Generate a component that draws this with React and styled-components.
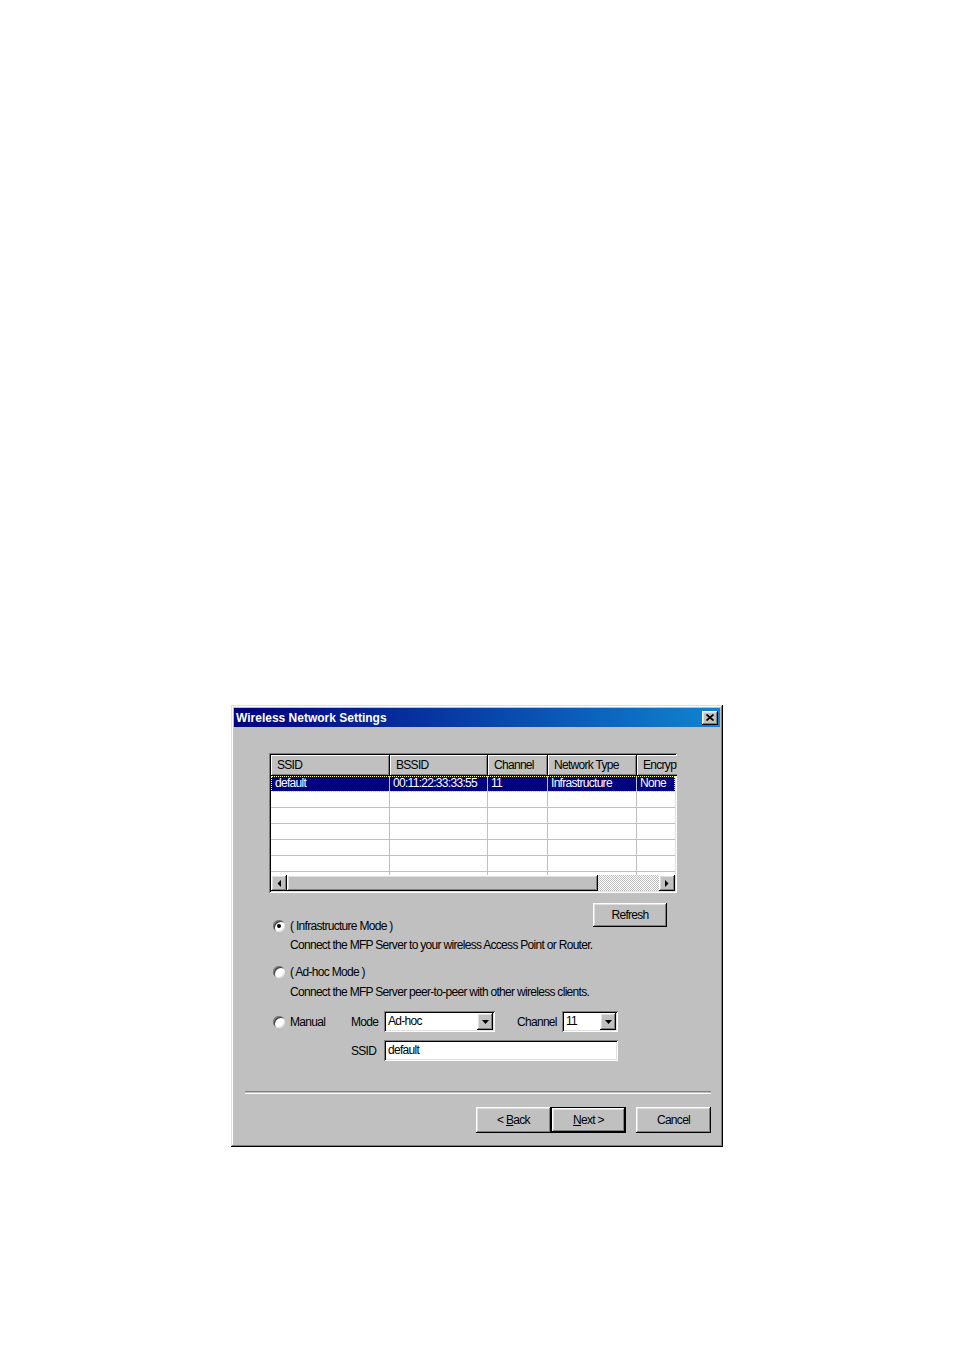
import React from 'react';
import styled, { createGlobalStyle, css } from 'styled-components';

const GlobalStyle = createGlobalStyle`
  html, body {
    margin: 0;
    padding: 0;
    background: #fff;
  }
  body {
    font-family: "Liberation Sans Narrow", "Liberation Sans", Arial, sans-serif;
    font-size: 12px;
    letter-spacing: -0.7px;
    color: #000;
  }
`;

const raised = css`
  box-shadow: inset -1px -1px #000, inset 1px 1px #fff, inset -2px -2px #808080, inset 2px 2px #dfdfdf;
`;

const sunken = css`
  box-shadow: inset 1px 1px #808080, inset -1px -1px #fff, inset 2px 2px #000, inset -2px -2px #dfdfdf;
`;

const Page = styled.div`
  width: 954px;
  height: 1350px;
  box-sizing: border-box;
  padding: 705px 0 0 231px;
`;

const Dialog = styled.div`
  width: 492px;
  height: 442px;
  box-sizing: border-box;
  padding: 3px;
  background: #c0c0c0;
  box-shadow: inset -1px -1px #000, inset 1px 1px #dfdfdf, inset -2px -2px #808080, inset 2px 2px #fff;
  display: flex;
  flex-direction: column;
`;

const TitleBar = styled.div`
  height: 19px;
  display: flex;
  align-items: center;
  justify-content: space-between;
  padding: 0 2px;
  background: linear-gradient(90deg, #000080, #1084d0);
`;

const Title = styled.span`
  font-family: "Liberation Sans", Arial, sans-serif;
  font-weight: bold;
  font-size: 12px;
  letter-spacing: 0;
  color: #fff;
`;

const CloseButton = styled.div`
  width: 16px;
  height: 14px;
  background: #c0c0c0;
  ${raised};
  display: flex;
  align-items: center;
  justify-content: center;
`;

const Body = styled.div`
  padding: 26px 0 0 35px;
  display: flex;
  flex-direction: column;
`;

const ListView = styled.div`
  width: 408px;
  height: 140px;
  box-sizing: border-box;
  padding: 2px;
  background: #fff;
  ${sunken};
  display: flex;
  flex-direction: column;
  overflow: hidden;
`;

const HeaderRow = styled.div`
  display: flex;
  height: 21px;
  flex: none;
`;

const HeaderCell = styled.div`
  flex: none;
  width: ${p => p.$w}px;
  box-sizing: border-box;
  padding-left: 6px;
  line-height: 20px;
  background: #c0c0c0;
  white-space: nowrap;
  overflow: hidden;
  box-shadow: inset -1px -1px #000, inset 1px 1px #fff, inset -2px -2px #808080;
`;

const Rows = styled.div`
  flex: 1;
  overflow: hidden;
`;

const Row = styled.div`
  display: flex;
  height: 16px;
  box-sizing: border-box;
  border-bottom: 1px solid #c0c0c0;
  background: ${p => (p.$selected ? '#000080' : '#fff')};
  color: ${p => (p.$selected ? '#fff' : '#000')};
  outline: ${p => (p.$selected ? '1px dotted #ffff80' : 'none')};
  outline-offset: -1px;
`;

const Cell = styled.div`
  flex: none;
  width: ${p => p.$w}px;
  box-sizing: border-box;
  padding-left: ${p => (p.$first ? 4 : 3)}px;
  line-height: 15px;
  border-right: 1px solid #c0c0c0;
  white-space: nowrap;
  overflow: hidden;
`;

const ScrollBar = styled.div`
  flex: none;
  height: 16px;
  display: flex;
  background: #c0c0c0;
`;

const ScrollButton = styled.div`
  flex: none;
  width: 16px;
  height: 16px;
  background: #c0c0c0;
  ${raised};
  display: flex;
  align-items: center;
  justify-content: center;
`;

const Thumb = styled.div`
  flex: none;
  width: 311px;
  height: 16px;
  background: #c0c0c0;
  ${raised};
`;

const Track = styled.div`
  flex: 1;
  background: repeating-conic-gradient(#c0c0c0 0 25%, #fff 0 50%) 0 0 / 2px 2px;
`;

const Options = styled.div`
  width: 398px;
  margin-top: 10px;
  display: flex;
  flex-direction: column;
`;

const FirstRow = styled.div`
  height: 31px;
  display: flex;
  justify-content: space-between;
`;

const RadioLine = styled.label`
  display: flex;
  align-items: center;
  align-self: ${p => (p.$bottom ? 'flex-end' : 'auto')};
  height: 16px;
  margin-top: ${p => p.$mt || 0}px;
  padding-left: 4px;
  gap: 5px;
  white-space: nowrap;
`;

const Radio = styled.span`
  position: relative;
  flex: none;
  width: 12px;
  height: 12px;
  border-radius: 50%;
  background: #fff;
  box-shadow: inset 1px 1px #808080, inset -1px -1px #dfdfdf, inset 2px 2px #404040;
  &::after {
    content: '';
    display: ${p => (p.$checked ? 'block' : 'none')};
    position: absolute;
    left: 4px;
    top: 4px;
    width: 4px;
    height: 4px;
    border-radius: 50%;
    background: #000;
  }
`;

const Description = styled.div`
  padding-left: 21px;
  line-height: 16px;
  margin-top: ${p => p.$mt}px;
  white-space: nowrap;
`;

const Button = styled.div`
  flex: none;
  width: ${p => p.$w}px;
  height: ${p => p.$h}px;
  box-sizing: border-box;
  display: flex;
  align-items: center;
  justify-content: center;
  background: #c0c0c0;
  white-space: pre;
  ${raised};
  ${p =>
    p.$default &&
    css`
      box-shadow: inset 0 0 0 1px #000, inset -2px -2px #000, inset 2px 2px #fff, inset -3px -3px #808080,
        inset 3px 3px #dfdfdf;
    `}
`;

const ManualGrid = styled.div`
  margin-top: 11px;
  display: grid;
  grid-template-columns: 82px 33px auto;
  row-gap: 8px;
  align-items: center;
`;

const FieldLabel = styled.span`
  white-space: nowrap;
`;

const FieldRow = styled.div`
  display: flex;
  align-items: center;
`;

const ChannelLabel = styled.span`
  width: 45px;
  margin-left: 22px;
  white-space: nowrap;
`;

const Combo = styled.div`
  width: ${p => p.$w}px;
  height: 21px;
  box-sizing: border-box;
  padding: 2px;
  background: #fff;
  ${sunken};
  display: flex;
  align-items: center;
`;

const ComboText = styled.span`
  flex: 1;
  padding-left: 2px;
  line-height: 17px;
`;

const DropButton = styled.div`
  width: 16px;
  height: 17px;
  background: #c0c0c0;
  ${raised};
  display: flex;
  align-items: center;
  justify-content: center;
`;

const TextField = styled(Combo)``;

const Separator = styled.div`
  margin: 30px 9px 0 11px;
  height: 1px;
  border-top: 1px solid #808080;
  border-bottom: 1px solid #fff;
`;

const ButtonBar = styled.div`
  margin: 13px 9px 0 0;
  display: flex;
  justify-content: flex-end;
`;

const Gap = styled.div`
  width: 10px;
`;

const LeftArrow = () => (
  <svg width="4" height="7" viewBox="0 0 4 7">
    <polygon points="4,0 4,7 0.5,3.5" fill="#000" />
  </svg>
);

const RightArrow = () => (
  <svg width="4" height="7" viewBox="0 0 4 7">
    <polygon points="0,0 0,7 3.5,3.5" fill="#000" />
  </svg>
);

const DownArrow = () => (
  <svg width="7" height="4" viewBox="0 0 7 4">
    <polygon points="0,0 7,0 3.5,4" fill="#000" />
  </svg>
);

const CloseGlyph = () => (
  <svg width="8" height="7" viewBox="0 0 8 7">
    <path d="M0.5 0.5 L7.5 6.5 M7.5 0.5 L0.5 6.5" stroke="#000" strokeWidth="1.7" />
  </svg>
);

const columns = [
  { title: 'SSID', w: 119 },
  { title: 'BSSID', w: 98 },
  { title: 'Channel', w: 60 },
  { title: 'Network Type', w: 89 },
  { title: 'Encryption', w: 90 },
];

const networks = [['default', '00:11:22:33:33:55', '11', 'Infrastructure', 'None']];

export default function App() {
  const emptyRows = Array.from({ length: 6 });
  return (
    <Page>
      <GlobalStyle />
      <Dialog>
        <TitleBar>
          <Title>Wireless Network Settings</Title>
          <CloseButton>
            <CloseGlyph />
          </CloseButton>
        </TitleBar>
        <Body>
          <ListView>
            <HeaderRow>
              {columns.map(c => (
                <HeaderCell key={c.title} $w={c.w}>
                  {c.title}
                </HeaderCell>
              ))}
            </HeaderRow>
            <Rows>
              {networks.map(n => (
                <Row key={n[1]} $selected>
                  {n.map((v, i) => (
                    <Cell key={i} $w={columns[i].w} $first={i === 0}>
                      {v}
                    </Cell>
                  ))}
                </Row>
              ))}
              {emptyRows.map((_, r) => (
                <Row key={r}>
                  {columns.map((c, i) => (
                    <Cell key={i} $w={c.w} />
                  ))}
                </Row>
              ))}
            </Rows>
            <ScrollBar>
              <ScrollButton>
                <LeftArrow />
              </ScrollButton>
              <Thumb />
              <Track />
              <ScrollButton>
                <RightArrow />
              </ScrollButton>
            </ScrollBar>
          </ListView>

          <Options>
            <FirstRow>
              <RadioLine $bottom>
                <Radio $checked />( Infrastructure Mode )
              </RadioLine>
              <Button $w={74} $h={24}>Refresh</Button>
            </FirstRow>
            <Description $mt={3}>Connect the MFP Server to your wireless Access Point or Router.</Description>
            <RadioLine $mt={11}>
              <Radio />( Ad-hoc Mode )
            </RadioLine>
            <Description $mt={4}>Connect the MFP Server peer-to-peer with other wireless clients.</Description>

            <ManualGrid>
              <RadioLine>
                <Radio />
                Manual
              </RadioLine>
              <FieldLabel>Mode</FieldLabel>
              <FieldRow>
                <Combo $w={111}>
                  <ComboText>Ad-hoc</ComboText>
                  <DropButton>
                    <DownArrow />
                  </DropButton>
                </Combo>
                <ChannelLabel>Channel</ChannelLabel>
                <Combo $w={56}>
                  <ComboText>11</ComboText>
                  <DropButton>
                    <DownArrow />
                  </DropButton>
                </Combo>
              </FieldRow>
              <span />
              <FieldLabel>SSID</FieldLabel>
              <TextField $w={234}>
                <ComboText>default</ComboText>
              </TextField>
            </ManualGrid>
          </Options>
        </Body>
        <Separator />
        <ButtonBar>
          <Button $w={75} $h={26}>
            <span>
              &lt; <u>B</u>ack
            </span>
          </Button>
          <Button $w={75} $h={26} $default>
            <span>
              <u>N</u>ext &gt;
            </span>
          </Button>
          <Gap />
          <Button $w={75} $h={26}>Cancel</Button>
        </ButtonBar>
      </Dialog>
    </Page>
  );
}
